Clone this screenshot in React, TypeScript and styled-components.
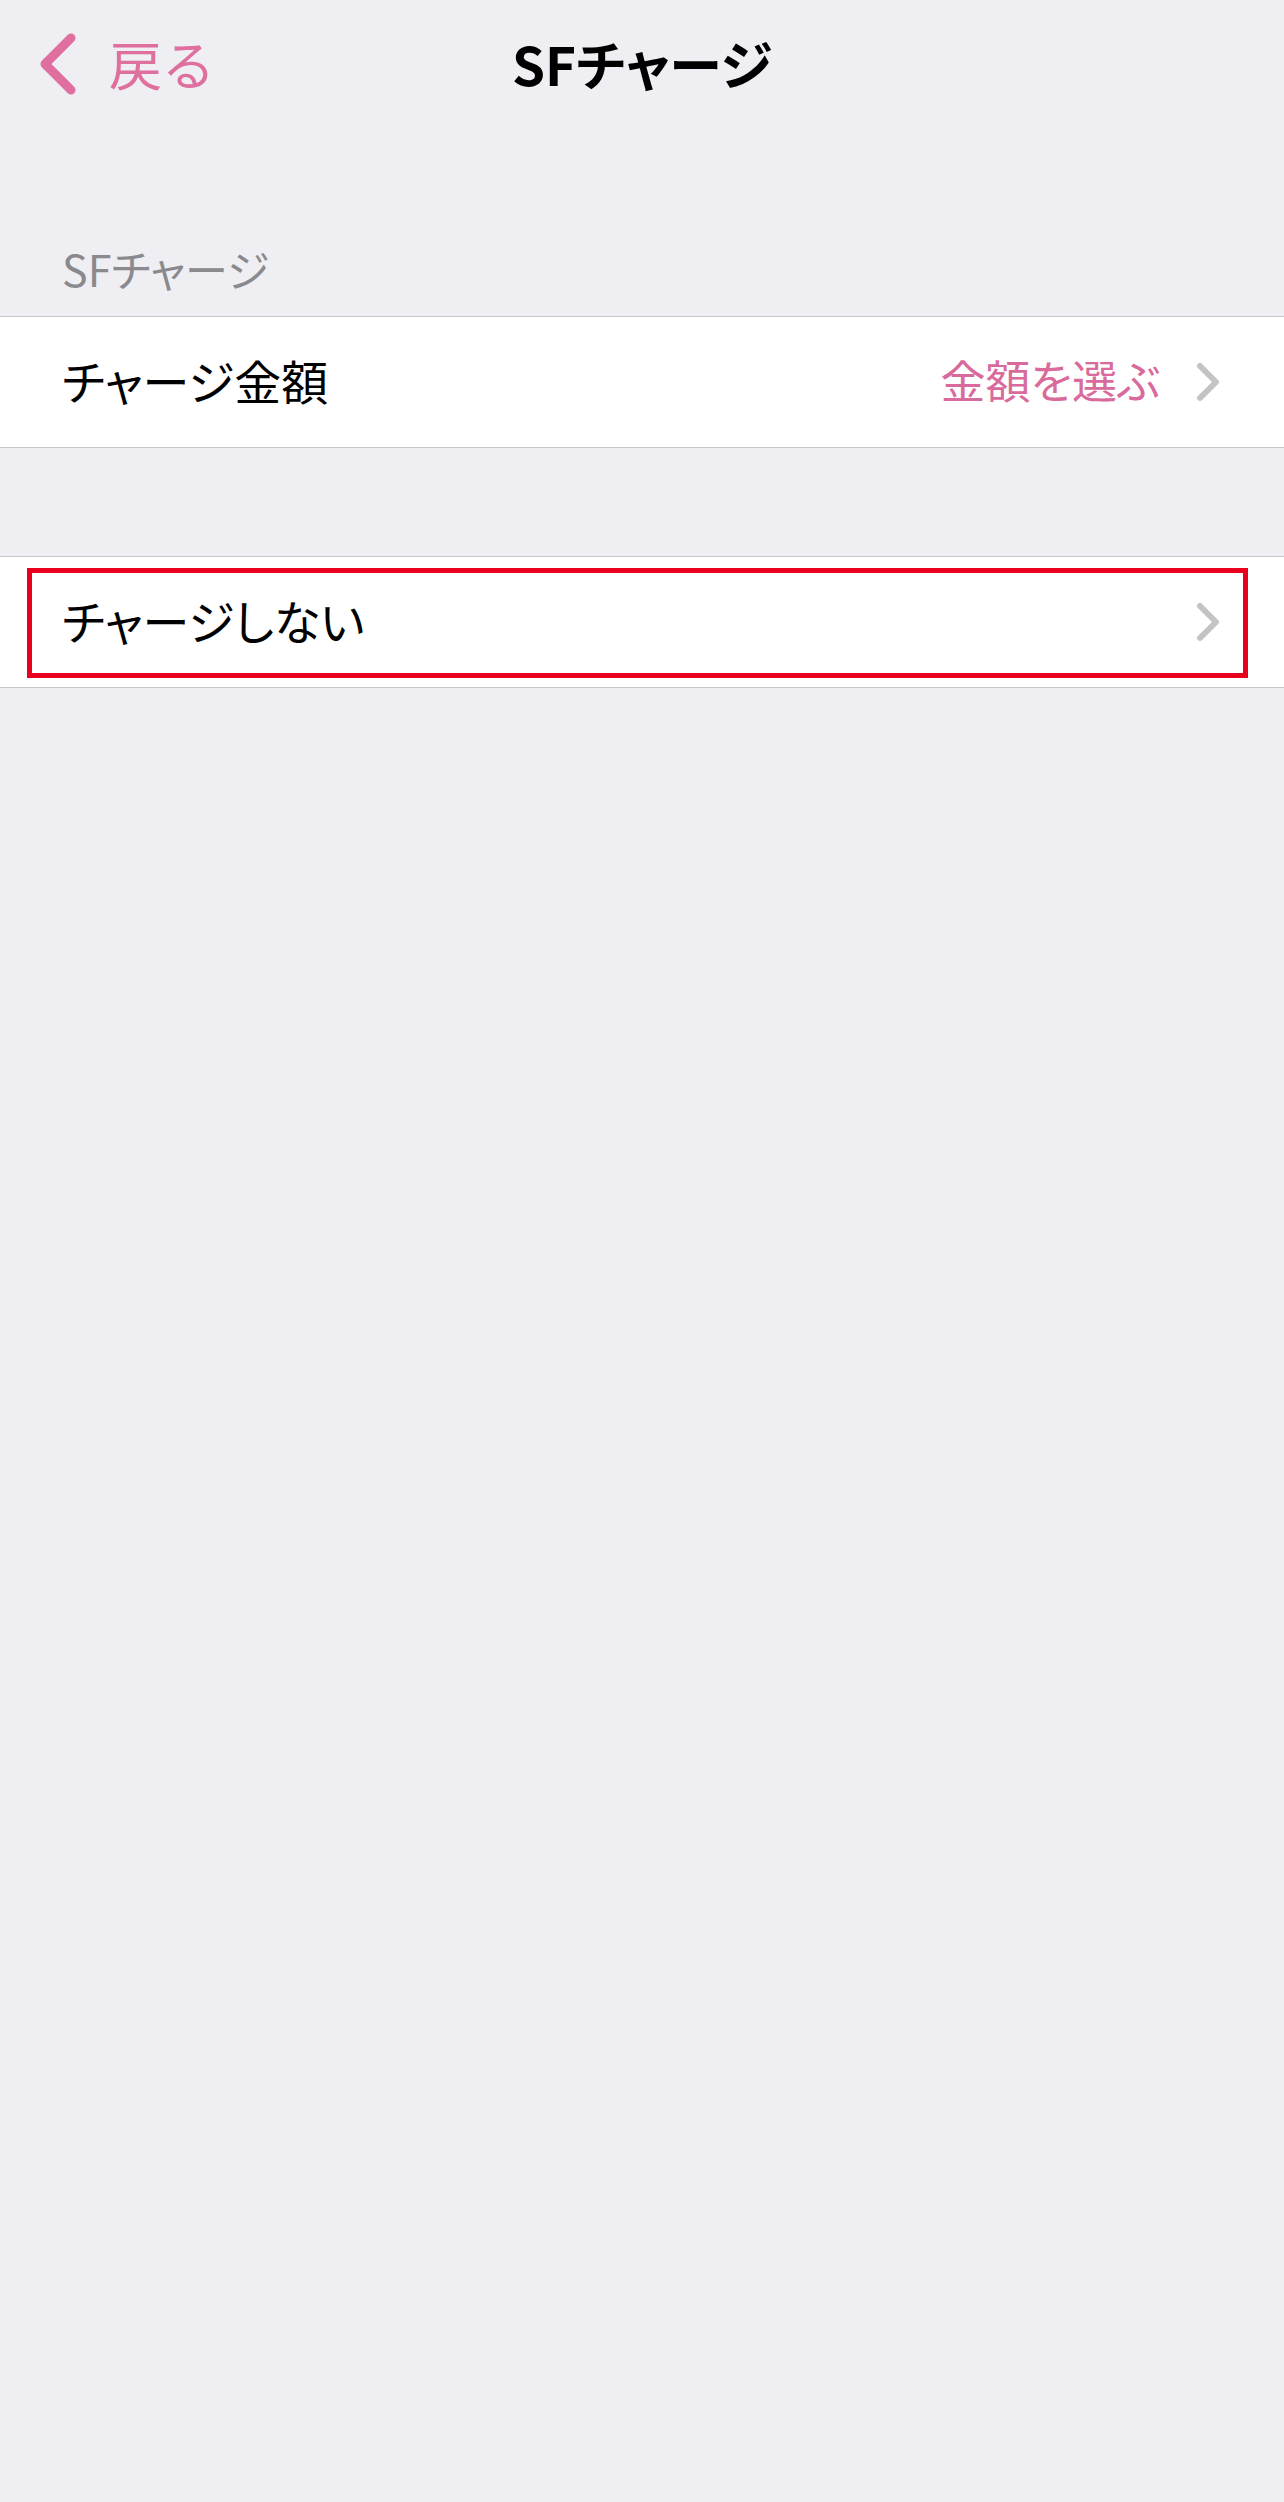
import React from 'react';
import styled, { createGlobalStyle } from 'styled-components';

const GlobalStyle = createGlobalStyle`
  html, body {
    margin: 0;
    padding: 0;
    background: #eeeef3;
  }
  body {
    font-family: "Noto Sans CJK JP", "Noto Sans", sans-serif;
    font-feature-settings: "palt";
    -webkit-font-smoothing: antialiased;
  }
`;

const PINK = '#de6f9f';

const BackChevron = () => (
  <svg width="40" height="64" viewBox="0 0 40 64">
    <path d="M33 6 L7 32 L33 58" fill="none" stroke={PINK} strokeWidth="9" strokeLinecap="round" strokeLinejoin="round" />
  </svg>
);

const RowChevron = () => (
  <svg width="24" height="40" viewBox="0 0 24 40">
    <path d="M4 4 L20 20 L4 36" fill="none" stroke="#c4c4c7" strokeWidth="6" strokeLinecap="round" strokeLinejoin="round" />
  </svg>
);

const App = () => {
  return (
    <>
      <GlobalStyle />
      <Screen>
        <NavBar>
          <BackButton>
            <BackChevron />
            <span>戻る</span>
          </BackButton>
          <Title>SFチャージ</Title>
          <div />
        </NavBar>

        <SectionHeader>SFチャージ</SectionHeader>
        <Group>
          <Row>
            <RowLabel>チャージ金額</RowLabel>
            <RowAccessory>
              <Detail>金額を選ぶ</Detail>
              <RowChevron />
            </RowAccessory>
          </Row>
        </Group>

        <Group $gap>
          <Row>
            <RowLabel>チャージしない</RowLabel>
            <RowAccessory>
              <RowChevron />
            </RowAccessory>
            <Highlight />
          </Row>
        </Group>
      </Screen>
    </>
  );
};

export default App;

const Screen = styled.div`
  width: 1284px;
  min-height: 2502px;
  background: #eeeef3;
  display: flex;
  flex-direction: column;
`;

const NavBar = styled.div`
  height: 128px;
  display: grid;
  grid-template-columns: 1fr auto 1fr;
  align-items: center;
`;

const BackButton = styled.div`
  display: flex;
  align-items: center;
  gap: 31px;
  padding-left: 38px;
  color: ${PINK};
  font-size: 53px;
  font-feature-settings: normal;
  line-height: 1;
  span {
    margin-top: -2px;
  }
`;

const Title = styled.div`
  font-size: 53px;
  font-weight: 700;
  color: #000;
  line-height: 1;
  margin-top: -1px;
`;

const SectionHeader = styled.div`
  height: 188px;
  box-sizing: border-box;
  padding: 0 0 26px 62px;
  display: flex;
  align-items: flex-end;
  font-size: 43px;
  color: #8a8a8e;
  line-height: 1;
`;

const Group = styled.div<{ $gap?: boolean }>`
  margin-top: ${(p) => (p.$gap ? '108px' : '0')};
  background: #fff;
  border-top: 1px solid #c8c8cc;
  border-bottom: 1px solid #c8c8cc;
`;

const Row = styled.div`
  position: relative;
  height: 130px;
  box-sizing: border-box;
  display: flex;
  align-items: center;
  justify-content: space-between;
  padding: 0 64px 0 62px;
`;

const RowLabel = styled.div`
  font-size: 47px;
  color: #000;
  line-height: 1;
  margin-top: -5px;
`;

const RowAccessory = styled.div`
  display: flex;
  align-items: center;
  gap: 36px;
`;

const Detail = styled.div`
  font-size: 45px;
  color: #d96a9c;
  line-height: 1;
  margin-top: -5px;
`;

const Highlight = styled.div`
  position: absolute;
  left: 27px;
  right: 36px;
  top: 11px;
  bottom: 9px;
  border: 5px solid #e8001c;
  pointer-events: none;
`;
